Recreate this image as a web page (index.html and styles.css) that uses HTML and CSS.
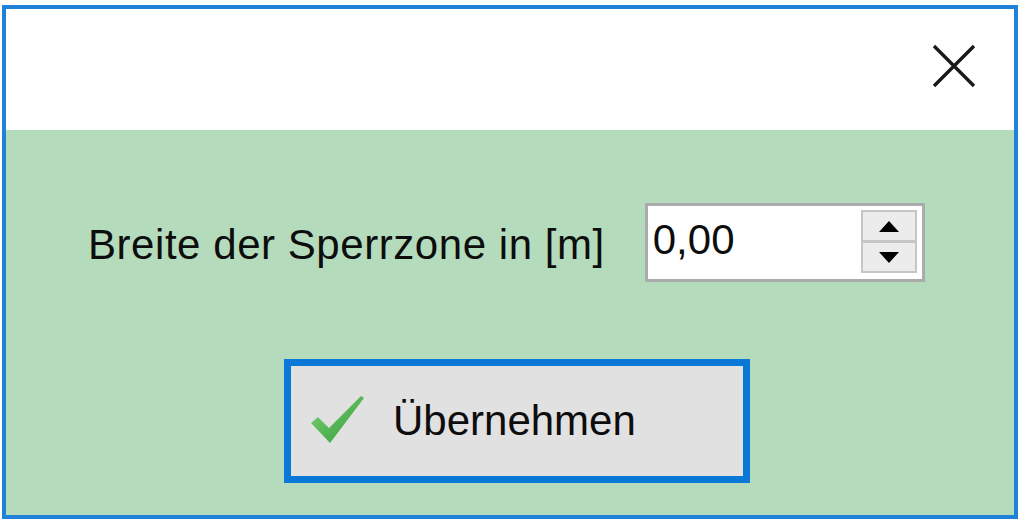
FILE: index.html
```html
<!DOCTYPE html>
<html lang="de">
<head>
<meta charset="utf-8">
<title>Sperrzone</title>
<link rel="stylesheet" href="styles.css">
</head>
<body>
<div class="dialog">
  <div class="titlebar">
    <div class="close" aria-label="Schließen">
      <svg width="44" height="44" viewBox="0 0 44 44"><path d="M2 2 L42 42 M42 2 L2 42" stroke="#1a1a1a" stroke-width="3.4" fill="none"/></svg>
    </div>
  </div>
  <div class="content">
    <div class="field-row">
      <span class="label">Breite der Sperrzone in [m]</span>
      <div class="spinbox">
        <span class="value">0,00</span>
        <div class="spin">
          <div class="spin-btn"><svg width="20" height="11" viewBox="0 0 20 11"><path d="M10 0 L20 11 L0 11 Z" fill="#000"/></svg></div>
          <div class="spin-btn"><svg width="20" height="11" viewBox="0 0 20 11"><path d="M0 0 L20 0 L10 11 Z" fill="#000"/></svg></div>
        </div>
      </div>
    </div>
    <div class="ok-button">
      <svg class="tick" width="56" height="52" viewBox="0 0 56 52">
        <defs>
          <linearGradient id="g" x1="0" y1="0" x2="1" y2="1">
            <stop offset="0" stop-color="#7fd47a"/>
            <stop offset="1" stop-color="#2f9a36"/>
          </linearGradient>
        </defs>
        <path d="M1 28 L8 22 L19 33 L51 1 L54 3 L20 48 Z" fill="url(#g)"/>
      </svg>
      <span class="ok-text">Übernehmen</span>
    </div>
  </div>
</div>
</body>
</html>
```

FILE: styles.css
```css
html, body {
  margin: 0;
  padding: 0;
  background: #ffffff;
}

body {
  font-family: "Liberation Sans", Arial, sans-serif;
  color: #0d0d0d;
}

.dialog {
  box-sizing: border-box;
  margin: 5px 0 0 2px;
  width: 1016px;
  height: 514px;
  border: 4px solid #1f82d8;
  display: flex;
  flex-direction: column;
}

.titlebar {
  height: 121px;
  background: #ffffff;
  display: flex;
  justify-content: flex-end;
  align-items: flex-start;
  padding: 35px 38px 0 0;
  box-sizing: border-box;
}

.close {
  width: 44px;
  height: 44px;
}

.close svg {
  display: block;
}

.content {
  flex: 1;
  background: #b4dcbc;
  display: flex;
  flex-direction: column;
  padding-top: 73px;
  box-sizing: border-box;
}

.field-row {
  display: flex;
  align-items: flex-start;
  padding-left: 82px;
  gap: 40px;
}

.label {
  font-size: 42px;
  line-height: 48px;
  letter-spacing: 0.55px;
  margin-top: 18px;
  white-space: nowrap;
}

.spinbox {
  box-sizing: border-box;
  width: 280px;
  height: 79px;
  border: 3px solid #ababab;
  background: #ffffff;
  display: flex;
  align-items: flex-start;
}

.value {
  font-size: 42px;
  line-height: 48px;
  padding: 10px 0 0 5px;
}

.spin {
  box-sizing: border-box;
  margin: 4px 5px 0 auto;
  width: 56px;
  height: 63px;
  border: 2px solid #c6c6c6;
  background: #c6c6c6;
  display: flex;
  flex-direction: column;
  gap: 3px;
}

.spin-btn {
  flex: 1;
  background: #ececec;
  display: flex;
  align-items: center;
  justify-content: center;
}

.spin-btn svg {
  display: block;
}

.ok-button {
  box-sizing: border-box;
  margin: 77px 0 0 278px;
  width: 466px;
  height: 124px;
  border: 7px solid #0a78d7;
  background: #e1e1e1;
  display: flex;
  align-items: center;
  padding-left: 19px;
}

.tick {
  display: block;
  flex: none;
}

.ok-text {
  font-size: 42px;
  line-height: 48px;
  margin-left: 27px;
}
```
